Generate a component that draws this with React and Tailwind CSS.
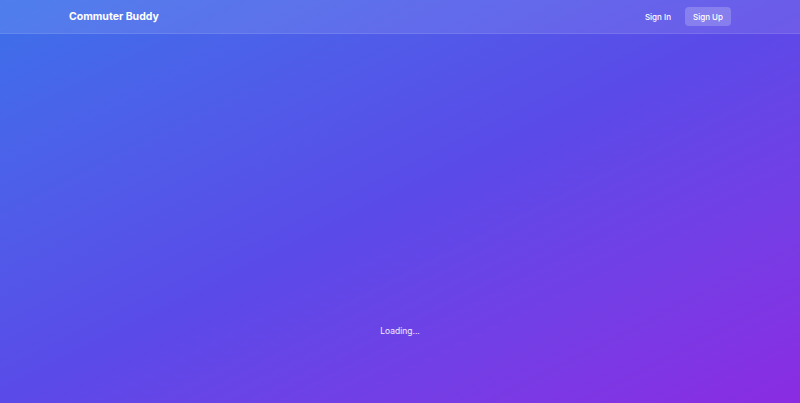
export default function App() {
  return (
    <div
      className="flex min-h-[403px] flex-col bg-gradient-to-br from-[#3b70ea] via-[#5a4ae8] to-[#8a2be2] text-white"
      style={{ fontFamily: "Inter, 'Noto Sans', sans-serif" }}
    >
      <header className="border-b border-white/10 bg-white/10">
        <nav className="flex h-[33px] items-center justify-between px-[69px]">
          <span className="text-[10.5px] font-bold">Commuter Buddy</span>
          <div className="flex items-center gap-[14px] text-[8px] font-medium">
            <button type="button" className="px-0">Sign In</button>
            <button
              type="button"
              className="h-[19px] w-[46px] rounded-[4px] bg-white/20"
            >
              Sign Up
            </button>
          </div>
        </nav>
      </header>

      <main className="flex flex-1 items-end justify-center pb-[65px]">
        <p className="text-[8.5px] text-white/90">Loading...</p>
      </main>
    </div>
  );
}
